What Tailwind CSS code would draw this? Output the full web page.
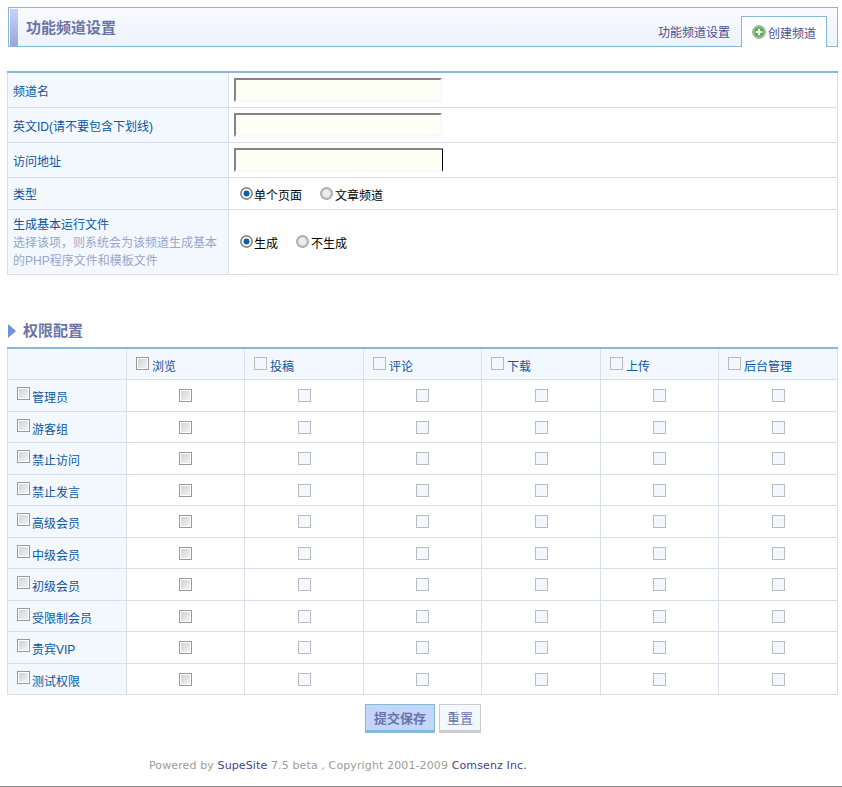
<!DOCTYPE html>
<html lang="zh-CN">
<head>
  <meta charset="UTF-8">
  <title>功能频道设置</title>
  <script src="https://cdn.jsdelivr.net/npm/@tailwindcss/browser@4"></script>
</head>
<body class="bg-white text-[12px] leading-[18px] text-black font-['Liberation_Sans','Noto_Sans_CJK_SC',sans-serif]">
  <div class="w-[842px] h-[787px] overflow-hidden pl-[7px] pr-[4px] pt-[7px] border-b border-[#888] relative">

    <!-- header -->
    <div class="ml-px h-[40px] border border-[#86b9d6] bg-gradient-to-b from-[#f8faff] to-[#eef2fc] flex items-end justify-between">
      <div class="self-stretch flex items-center">
        <div class="w-[8px] ml-px h-[37px] bg-gradient-to-b from-[#c4d4fc] to-[#9aa6dc]"></div>
        <h1 class="ml-[8px] pt-[2px] text-[15px] font-bold text-[#6b74a8]">功能频道设置</h1>
      </div>
      <div class="flex items-end">
        <a class="mr-[11px] pb-[4px] text-[#47508f]">功能频道设置</a>
        <a class="mr-[10px] -mb-px w-[86px] h-[31px] bg-white border border-b-0 border-[#86b9d6] flex items-center pl-[10px] pt-[3px] text-[#47508f]">
          <svg class="w-[14px] h-[14px] mr-[2px] -mt-[3px]" viewBox="0 0 14 14"><circle cx="7" cy="7" r="6.5" fill="#8fc48a" stroke="#9bbf97"/><circle cx="7" cy="7" r="4.7" fill="#5ba955"/><path d="M7 3.7v6.6M3.7 7h6.6" stroke="#fff" stroke-width="2"/></svg>创建频道
        </a>
      </div>
    </div>

    <!-- channel form -->
    <table class="mt-[24px] w-[831px] table-fixed border-collapse border-t-2 border-t-[#86b9d6] [&_td]:border [&_td]:border-[#d8dfea] [&_td]:border-t-0">
      <colgroup><col class="w-[221px]"><col></colgroup>
      <tr class="h-[35px]">
        <td class="bg-[#f3f8ff] pl-[5px] pt-[5px] text-[#0b57a0]">频道名</td>
        <td class="pl-[5px]"><input type="text" class="block w-[208px] h-[24px] bg-[#fefff4] border-2 border-[#f4f8ff] border-t-[#848484] border-l-[#848484]"></td>
      </tr>
      <tr class="h-[35px]">
        <td class="bg-[#f3f8ff] pl-[5px] pt-[5px] text-[#0b57a0]">英文ID(请不要包含下划线)</td>
        <td class="pl-[5px]"><input type="text" class="block w-[208px] h-[24px] bg-[#fefff4] border-2 border-[#f4f8ff] border-t-[#848484] border-l-[#848484]"></td>
      </tr>
      <tr class="h-[35px]">
        <td class="bg-[#f3f8ff] pl-[5px] pt-[5px] text-[#0b57a0]">访问地址</td>
        <td class="pl-[5px]"><input type="text" class="block w-[209px] h-[24px] bg-[#fefff4] border-2 border-[#f4f8ff] border-t-[#848484] border-l-[#848484] border-r-black border-r"></td>
      </tr>
      <tr class="h-[32px]">
        <td class="bg-[#f3f8ff] pl-[5px] pt-[4px] text-[#0b57a0]">类型</td>
        <td class="pl-[11px]">
          <div class="flex items-center pt-[6px]">
            <span class="w-[13px] h-[13px] rounded-full bg-[radial-gradient(circle,#0a62ac_0_30%,#fff_36%_46%,#8a8a8a_56%_70%,transparent_71%)] mr-px -mt-[5px]"></span>单个页面
            <span class="w-[13px] h-[13px] rounded-full bg-[radial-gradient(circle,#ececec_0_36%,#a8a8a8_60%_70%,transparent_71%)] ml-[18px] mr-[2px] -mt-[5px]"></span>文章频道
          </div>
        </td>
      </tr>
      <tr class="h-[65px]">
        <td class="bg-[#f3f8ff] pl-[5px] pr-[4px] pt-[2px] text-[#0b57a0]">
          生成基本运行文件
          <p class="text-[#9aa6c8]">选择该项，则系统会为该频道生成基本的PHP程序文件和模板文件</p>
        </td>
        <td class="pl-[11px]">
          <div class="flex items-center pt-[5px]">
            <span class="w-[13px] h-[13px] rounded-full bg-[radial-gradient(circle,#0a62ac_0_30%,#fff_36%_46%,#8a8a8a_56%_70%,transparent_71%)] mr-px -mt-[5px]"></span>生成
            <span class="w-[13px] h-[13px] rounded-full bg-[radial-gradient(circle,#ececec_0_36%,#a8a8a8_60%_70%,transparent_71%)] ml-[18px] mr-[2px] -mt-[5px]"></span>不生成
          </div>
        </td>
      </tr>
    </table>

    <!-- permissions -->
    <h2 class="mt-[44px] h-[24px] flex items-center text-[15px] font-bold text-[#6b74a8]">
      <svg class="w-[8px] h-[14px] ml-px mr-[7px]" viewBox="0 0 8 14"><path d="M0 0l8 7-8 7z" fill="#6d93de"/></svg>权限配置
    </h2>
    <table class="mt-[4px] w-[830px] table-fixed border-collapse border-t-2 border-t-[#86b9d6] text-[#0b57a0] [&_td]:border [&_td]:border-[#d8dfea] [&_td]:border-t-0 [&_td]:p-0 [&_tr:nth-child(odd)]:h-[31px] [&_tr:nth-child(even)]:h-[32px] [&_td:first-child]:bg-[#f3f8ff] [&_td:first-child]:pl-[9px] [&_span]:inline-block [&_span]:w-[13px] [&_span]:h-[13px] [&_span]:border [&_span]:align-[1px] [&_span]:mr-[2px] [&_td:first-child_span]:!align-[2px]">
      <colgroup><col class="w-[119px]"><col class="w-[118px]"><col class="w-[119px]"><col class="w-[118px]"><col class="w-[119px]"><col class="w-[118px]"><col class="w-[119px]"></colgroup>
      <tr class="!h-[32px] bg-[#f3f8ff] [&_td]:pt-[6px] [&_td:not(:first-child)]:pl-[9px] [&_span]:!mr-[3px]">
        <td></td>
        <td><span class="border-[#999] bg-gradient-to-br from-[#cfcfcf] to-[#f6f6f6] shadow-[inset_0_0_0_1px_#fff]"></span>浏览</td>
        <td><span class="border-[#bbb] bg-[#f3f8ff]"></span>投稿</td>
        <td><span class="border-[#bbb] bg-[#f3f8ff]"></span>评论</td>
        <td><span class="border-[#bbb] bg-[#f3f8ff]"></span>下载</td>
        <td><span class="border-[#bbb] bg-[#f3f8ff]"></span>上传</td>
        <td><span class="border-[#bbb] bg-[#f3f8ff]"></span>后台管理</td>
      </tr>
      <tr class="[&_td]:pt-[6px] [&_td:first-child]:pt-[3px] [&_td:not(:first-child)]:text-center"><td><span class="border-[#999] bg-gradient-to-br from-[#cfcfcf] to-[#f6f6f6] shadow-[inset_0_0_0_1px_#fff]"></span>管理员</td><td><span class="border-[#999] bg-gradient-to-br from-[#cfcfcf] to-[#f6f6f6] shadow-[inset_0_0_0_1px_#fff] !mr-0"></span></td><td><span class="border-[#bbb] bg-[#f3f8ff] !mr-0"></span></td><td><span class="border-[#bbb] bg-[#f3f8ff] !mr-0"></span></td><td><span class="border-[#bbb] bg-[#f3f8ff] !mr-0"></span></td><td><span class="border-[#bbb] bg-[#f3f8ff] !mr-0"></span></td><td><span class="border-[#bbb] bg-[#f3f8ff] !mr-0"></span></td></tr>
      <tr class="[&_td]:pt-[6px] [&_td:first-child]:pt-[3px] [&_td:not(:first-child)]:text-center"><td><span class="border-[#999] bg-gradient-to-br from-[#cfcfcf] to-[#f6f6f6] shadow-[inset_0_0_0_1px_#fff]"></span>游客组</td><td><span class="border-[#999] bg-gradient-to-br from-[#cfcfcf] to-[#f6f6f6] shadow-[inset_0_0_0_1px_#fff] !mr-0"></span></td><td><span class="border-[#bbb] bg-[#f3f8ff] !mr-0"></span></td><td><span class="border-[#bbb] bg-[#f3f8ff] !mr-0"></span></td><td><span class="border-[#bbb] bg-[#f3f8ff] !mr-0"></span></td><td><span class="border-[#bbb] bg-[#f3f8ff] !mr-0"></span></td><td><span class="border-[#bbb] bg-[#f3f8ff] !mr-0"></span></td></tr>
      <tr class="[&_td]:pt-[6px] [&_td:first-child]:pt-[3px] [&_td:not(:first-child)]:text-center"><td><span class="border-[#999] bg-gradient-to-br from-[#cfcfcf] to-[#f6f6f6] shadow-[inset_0_0_0_1px_#fff]"></span>禁止访问</td><td><span class="border-[#999] bg-gradient-to-br from-[#cfcfcf] to-[#f6f6f6] shadow-[inset_0_0_0_1px_#fff] !mr-0"></span></td><td><span class="border-[#bbb] bg-[#f3f8ff] !mr-0"></span></td><td><span class="border-[#bbb] bg-[#f3f8ff] !mr-0"></span></td><td><span class="border-[#bbb] bg-[#f3f8ff] !mr-0"></span></td><td><span class="border-[#bbb] bg-[#f3f8ff] !mr-0"></span></td><td><span class="border-[#bbb] bg-[#f3f8ff] !mr-0"></span></td></tr>
      <tr class="[&_td]:pt-[6px] [&_td:first-child]:pt-[3px] [&_td:not(:first-child)]:text-center"><td><span class="border-[#999] bg-gradient-to-br from-[#cfcfcf] to-[#f6f6f6] shadow-[inset_0_0_0_1px_#fff]"></span>禁止发言</td><td><span class="border-[#999] bg-gradient-to-br from-[#cfcfcf] to-[#f6f6f6] shadow-[inset_0_0_0_1px_#fff] !mr-0"></span></td><td><span class="border-[#bbb] bg-[#f3f8ff] !mr-0"></span></td><td><span class="border-[#bbb] bg-[#f3f8ff] !mr-0"></span></td><td><span class="border-[#bbb] bg-[#f3f8ff] !mr-0"></span></td><td><span class="border-[#bbb] bg-[#f3f8ff] !mr-0"></span></td><td><span class="border-[#bbb] bg-[#f3f8ff] !mr-0"></span></td></tr>
      <tr class="[&_td]:pt-[6px] [&_td:first-child]:pt-[3px] [&_td:not(:first-child)]:text-center"><td><span class="border-[#999] bg-gradient-to-br from-[#cfcfcf] to-[#f6f6f6] shadow-[inset_0_0_0_1px_#fff]"></span>高级会员</td><td><span class="border-[#999] bg-gradient-to-br from-[#cfcfcf] to-[#f6f6f6] shadow-[inset_0_0_0_1px_#fff] !mr-0"></span></td><td><span class="border-[#bbb] bg-[#f3f8ff] !mr-0"></span></td><td><span class="border-[#bbb] bg-[#f3f8ff] !mr-0"></span></td><td><span class="border-[#bbb] bg-[#f3f8ff] !mr-0"></span></td><td><span class="border-[#bbb] bg-[#f3f8ff] !mr-0"></span></td><td><span class="border-[#bbb] bg-[#f3f8ff] !mr-0"></span></td></tr>
      <tr class="[&_td]:pt-[6px] [&_td:first-child]:pt-[3px] [&_td:not(:first-child)]:text-center"><td><span class="border-[#999] bg-gradient-to-br from-[#cfcfcf] to-[#f6f6f6] shadow-[inset_0_0_0_1px_#fff]"></span>中级会员</td><td><span class="border-[#999] bg-gradient-to-br from-[#cfcfcf] to-[#f6f6f6] shadow-[inset_0_0_0_1px_#fff] !mr-0"></span></td><td><span class="border-[#bbb] bg-[#f3f8ff] !mr-0"></span></td><td><span class="border-[#bbb] bg-[#f3f8ff] !mr-0"></span></td><td><span class="border-[#bbb] bg-[#f3f8ff] !mr-0"></span></td><td><span class="border-[#bbb] bg-[#f3f8ff] !mr-0"></span></td><td><span class="border-[#bbb] bg-[#f3f8ff] !mr-0"></span></td></tr>
      <tr class="[&_td]:pt-[6px] [&_td:first-child]:pt-[3px] [&_td:not(:first-child)]:text-center"><td><span class="border-[#999] bg-gradient-to-br from-[#cfcfcf] to-[#f6f6f6] shadow-[inset_0_0_0_1px_#fff]"></span>初级会员</td><td><span class="border-[#999] bg-gradient-to-br from-[#cfcfcf] to-[#f6f6f6] shadow-[inset_0_0_0_1px_#fff] !mr-0"></span></td><td><span class="border-[#bbb] bg-[#f3f8ff] !mr-0"></span></td><td><span class="border-[#bbb] bg-[#f3f8ff] !mr-0"></span></td><td><span class="border-[#bbb] bg-[#f3f8ff] !mr-0"></span></td><td><span class="border-[#bbb] bg-[#f3f8ff] !mr-0"></span></td><td><span class="border-[#bbb] bg-[#f3f8ff] !mr-0"></span></td></tr>
      <tr class="[&_td]:pt-[6px] [&_td:first-child]:pt-[3px] [&_td:not(:first-child)]:text-center"><td><span class="border-[#999] bg-gradient-to-br from-[#cfcfcf] to-[#f6f6f6] shadow-[inset_0_0_0_1px_#fff]"></span>受限制会员</td><td><span class="border-[#999] bg-gradient-to-br from-[#cfcfcf] to-[#f6f6f6] shadow-[inset_0_0_0_1px_#fff] !mr-0"></span></td><td><span class="border-[#bbb] bg-[#f3f8ff] !mr-0"></span></td><td><span class="border-[#bbb] bg-[#f3f8ff] !mr-0"></span></td><td><span class="border-[#bbb] bg-[#f3f8ff] !mr-0"></span></td><td><span class="border-[#bbb] bg-[#f3f8ff] !mr-0"></span></td><td><span class="border-[#bbb] bg-[#f3f8ff] !mr-0"></span></td></tr>
      <tr class="[&_td]:pt-[6px] [&_td:first-child]:pt-[3px] [&_td:not(:first-child)]:text-center"><td><span class="border-[#999] bg-gradient-to-br from-[#cfcfcf] to-[#f6f6f6] shadow-[inset_0_0_0_1px_#fff]"></span>贵宾VIP</td><td><span class="border-[#999] bg-gradient-to-br from-[#cfcfcf] to-[#f6f6f6] shadow-[inset_0_0_0_1px_#fff] !mr-0"></span></td><td><span class="border-[#bbb] bg-[#f3f8ff] !mr-0"></span></td><td><span class="border-[#bbb] bg-[#f3f8ff] !mr-0"></span></td><td><span class="border-[#bbb] bg-[#f3f8ff] !mr-0"></span></td><td><span class="border-[#bbb] bg-[#f3f8ff] !mr-0"></span></td><td><span class="border-[#bbb] bg-[#f3f8ff] !mr-0"></span></td></tr>
      <tr class="[&_td]:pt-[6px] [&_td:first-child]:pt-[3px] [&_td:not(:first-child)]:text-center"><td><span class="border-[#999] bg-gradient-to-br from-[#cfcfcf] to-[#f6f6f6] shadow-[inset_0_0_0_1px_#fff]"></span>测试权限</td><td><span class="border-[#999] bg-gradient-to-br from-[#cfcfcf] to-[#f6f6f6] shadow-[inset_0_0_0_1px_#fff] !mr-0"></span></td><td><span class="border-[#bbb] bg-[#f3f8ff] !mr-0"></span></td><td><span class="border-[#bbb] bg-[#f3f8ff] !mr-0"></span></td><td><span class="border-[#bbb] bg-[#f3f8ff] !mr-0"></span></td><td><span class="border-[#bbb] bg-[#f3f8ff] !mr-0"></span></td><td><span class="border-[#bbb] bg-[#f3f8ff] !mr-0"></span></td></tr>
    </table>

    <!-- buttons -->
    <div class="mt-[9px] flex justify-center gap-[4px] pl-[1px]">
      <button class="w-[70px] h-[29px] pt-[2px] text-[13px] bg-[#c2d6fc] border border-[#86b9d6] border-b-[3px] font-bold text-[#6b74a8]">提交保存</button>
      <button class="w-[42px] h-[29px] pt-[2px] text-[13px] bg-[#f3f8ff] border border-[#ccc] border-b-[3px] text-[#6b74a8]">重置</button>
    </div>

    <p class="mt-[24px] ml-[142px] text-[11px] tracking-[0.12px] text-[#a09a96] font-['DejaVu_Sans',sans-serif]">Powered by <a class="text-[#47408f]">SupeSite</a> 7.5 beta , Copyright 2001-2009 <a class="text-[#47408f]">Comsenz Inc.</a></p>
  </div>
</body>
</html>
